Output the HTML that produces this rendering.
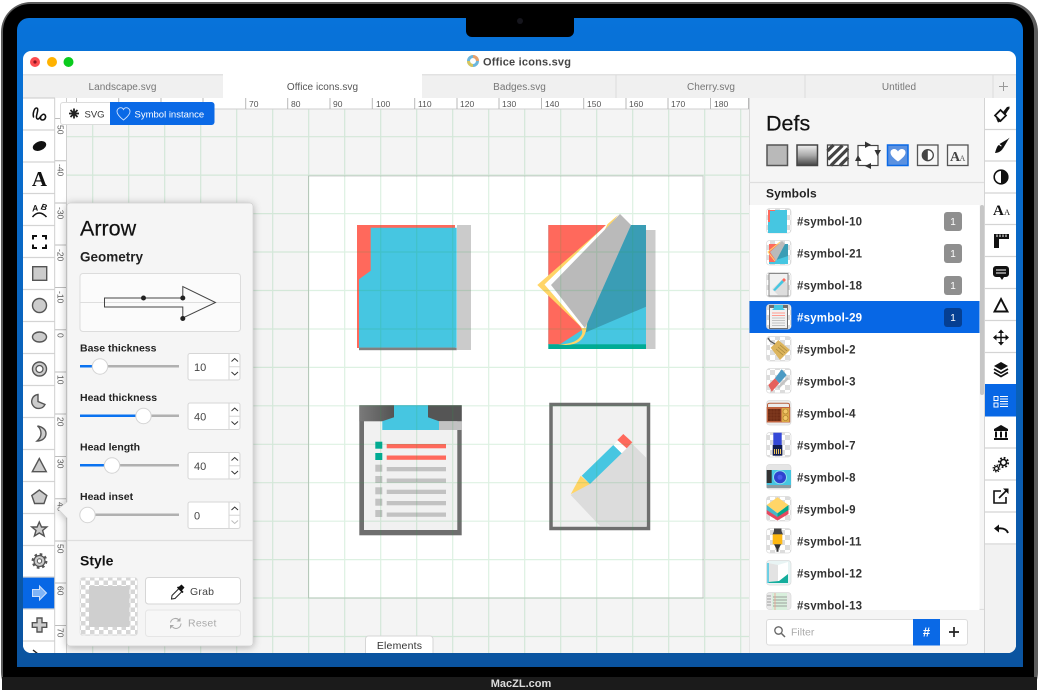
<!DOCTYPE html>
<html><head><meta charset="utf-8"><title>Office icons.svg</title>
<style>
html,body{margin:0;padding:0;background:#fff;width:1040px;height:690px;overflow:hidden}
svg{display:block;filter:blur(.3px)}
text{font-family:"Liberation Sans",sans-serif}
.t{font-size:10px;fill:#777;text-anchor:middle;letter-spacing:.05px}
.rh{font-size:8.500px;fill:#555}
.rv{font-size:8.500px;fill:#555}
.lb{font-size:10.500px;font-weight:bold;fill:#222}
.v{font-size:11px;fill:#444}
.s{font-size:11.500px;font-weight:bold;fill:#333;letter-spacing:.2px}
.b{font-size:10px;fill:#fff;text-anchor:middle}
.ic{fill:#ccc;stroke:#555;stroke-width:1.4}
.th{stroke:#dadada;stroke-width:.7}
</style></head><body>
<svg width="1040" height="690" viewBox="0 0 1040 690" xmlns="http://www.w3.org/2000/svg">
<defs>
<linearGradient id="bl" x1="0" y1="0" x2="0" y2="1"><stop offset="0" stop-color="#0873da"/><stop offset="1" stop-color="#0a539f"/></linearGradient>
<linearGradient id="hd" x1="0" y1="0" x2="1" y2="0"><stop offset="0" stop-color="#7a7a7a"/><stop offset="1" stop-color="#545454"/></linearGradient>
<linearGradient id="gr" x1="0" y1="0" x2="0" y2="1"><stop offset="0" stop-color="#f0f0f0"/><stop offset=".5" stop-color="#aaa"/><stop offset="1" stop-color="#444"/></linearGradient>
<pattern id="ck" width="10" height="10" patternUnits="userSpaceOnUse"><rect width="10" height="10" fill="#fff"/><rect width="5" height="5" fill="#dcdcdc"/><rect x="5" y="5" width="5" height="5" fill="#dcdcdc"/></pattern>
<pattern id="ck2" width="9" height="9" patternUnits="userSpaceOnUse"><rect width="9" height="9" fill="#fff"/><rect width="4.500" height="4.500" fill="#d6d6d6"/><rect x="4.500" y="4.500" width="4.500" height="4.500" fill="#d6d6d6"/></pattern>
<filter id="sh" x="-20%" y="-10%" width="140%" height="120%"><feDropShadow dx="0" dy="1" stdDeviation="4" flood-color="#000" flood-opacity=".3"/></filter>
<clipPath id="scr"><path d="M23 59a8 8 0 0 1 8-8H1008a8 8 0 0 1 8 8V645a8 8 0 0 1-8 8H31a8 8 0 0 1-8-8Z"/></clipPath>
</defs>

<!-- laptop -->
<rect x="1" y="2" width="1037" height="700" rx="30" fill="#5c5c5c"/>
<rect x="3" y="4" width="1031" height="700" rx="27" fill="#000"/>
<rect x="2" y="677" width="1035" height="13" fill="#1b1b1b"/>
<path d="M17 30a12 12 0 0 1 12-12H1011a12 12 0 0 1 12 12V667H17Z" fill="url(#bl)"/>
<path d="M466 18H574V31a6 6 0 0 1-6 6H472a6 6 0 0 1-6-6Z" fill="#000"/>
<circle cx="520" cy="21" r="3" fill="#15151c"/>
<text x="521" y="687" font-size="11" font-weight="bold" fill="#ddd" text-anchor="middle">MacZL.com</text>

<g clip-path="url(#scr)">
<rect x="23" y="51" width="993" height="603" fill="#fff"/>
<!-- title -->
<circle cx="35" cy="62" r="5" fill="#fc4b4f"/><circle cx="35" cy="62" r="1.600" fill="#8c1420"/>
<circle cx="52" cy="62" r="5" fill="#ffb200"/>
<circle cx="68.500" cy="62" r="5" fill="#0acb1d"/>
<circle cx="473" cy="61" r="4.500" fill="none" stroke="#6cb6dc" stroke-width="3"/>
<path d="M473 56.500a4.500 4.500 0 0 1 4.500 4.500" fill="none" stroke="#e9a06a" stroke-width="3"/>
<path d="M468.500 61a4.500 4.500 0 0 0 4.500 4.500" fill="none" stroke="#d8c65e" stroke-width="3"/>
<text x="483" y="65.500" font-size="11" font-weight="bold" fill="#444" letter-spacing=".2">Office icons.svg</text>
<!-- tabs -->
<rect x="23" y="74" width="993" height="24" fill="#f0f0f0"/>
<rect x="23" y="74" width="993" height="1.500" fill="#e2e2e2"/>
<rect x="223" y="74" width="199" height="24" fill="#fff"/>
<path d="M616 75V98M805 75V98M993 75V98" stroke="#dcdcdc"/>
<text class="t" x="122.500" y="90">Landscape.svg</text>
<text class="t" x="322.500" y="90" style="fill:#555">Office icons.svg</text>
<text class="t" x="519.500" y="90">Badges.svg</text>
<text class="t" x="711" y="90">Cherry.svg</text>
<text class="t" x="899" y="90">Untitled</text>
<path d="M999 86.500h9M1003.500 82v9" stroke="#999" stroke-width="1"/>

<!-- canvas -->
<rect x="55" y="98" width="694" height="556" fill="#f4f4f4"/>
<rect x="308.500" y="176" width="394.500" height="422" fill="#fff" stroke="#c4c4c4" stroke-width=".8"/>

<!-- icon 1 -->
<rect x="357" y="225" width="98" height="123" fill="#ff695c"/>
<rect x="457" y="225" width="14" height="125" fill="#cbcbcb"/>
<path d="M370.700 227.700H456.700V347.700H359V279.300L370.700 270.700Z" fill="#46c6e1"/>
<rect x="359" y="347.700" width="97.700" height="2.500" fill="#808080"/>
<!-- icon 2 -->
<rect x="646" y="230" width="9.500" height="119" fill="#cbcbcb"/>
<rect x="548.300" y="225" width="97.700" height="120" fill="#46c6e1"/>
<path d="M548.300 225H612L585 328L560 344.300H548.300Z" fill="#ff695c"/>
<path d="M631 225H646V306.700L582 334Z" fill="#3a9db5"/>
<rect x="548.300" y="344.300" width="97.700" height="4.700" fill="#00ab94"/>
<path d="M618 215L537.300 285L579 325Q585 332 580 337Q575 344 558 344.500L566 345Q582 345 586 331L600 240Z" fill="#ffd567"/>
<path d="M608 223L544.500 284.500L582 328L586 328L600 240Z" fill="#fff"/>
<path d="M620 214L631 225L585 328.300L551 285Z" fill="#bababa"/>
<!-- icon 3 -->
<rect x="359.300" y="405.300" width="102.400" height="130" fill="#6e6e6e"/>
<path d="M359.300 405.300H394V421.300H359.300Z" fill="url(#hd)"/>
<path d="M428 405.300H461.700V421.300H428Z" fill="#555"/>
<rect x="364" y="421.300" width="93.300" height="108.700" fill="#f1f1f1"/>
<path d="M439 421.300H461.700V430H439Z" fill="#c2c2c2"/>
<path d="M394 405.300H428V417.300L439 421.300V430H382.300V421.300L394 417.300Z" fill="#46c6e1"/>
<rect x="375.300" y="441.700" width="7" height="7" fill="#00ab94"/><rect x="386.700" y="444" width="59.300" height="4.300" fill="#ff695c"/>
<rect x="375.300" y="453" width="7" height="7" fill="#00ab94"/><rect x="386.700" y="455.500" width="59.300" height="4.300" fill="#ff695c"/>
<g fill="#c2c2c2">
<rect x="375.300" y="464.700" width="7" height="7"/><rect x="386.700" y="467" width="59.300" height="4.300"/>
<rect x="375.300" y="476" width="7" height="7"/><rect x="386.700" y="478.500" width="59.300" height="4.300"/>
<rect x="375.300" y="487.300" width="7" height="7"/><rect x="386.700" y="489.700" width="59.300" height="4.300"/>
<rect x="375.300" y="498.700" width="7" height="7"/><rect x="386.700" y="501" width="59.300" height="4.300"/>
<rect x="375.300" y="510" width="7" height="7"/><rect x="386.700" y="512.500" width="59.300" height="4.300"/>
</g>
<!-- icon 4 -->
<rect x="551" y="404.500" width="97.500" height="124" fill="#f1f1f1" stroke="#6e6e6e" stroke-width="3.500"/>
<path d="M631.700 443.300L646.700 458.300V526H600L570.700 495Z" fill="#dcdcdc"/>
<path d="M570.700 494.300L580.700 475.700L590 484Z" fill="#ffd567"/>
<path d="M581.700 475.700L613.300 445L621.700 453.300L590 484Z" fill="#46c6e1"/>
<path d="M613.300 445L618.300 440L626.700 448.300L621.700 453.300Z" fill="#fff"/>
<path d="M617.300 440L623.300 434L632.300 442.300L626.700 448.300Z" fill="#ff695c"/>

<!-- grid -->
<path d="M92.700 109V654M128.700 109V654M164.700 109V654M200.700 109V654M236.700 109V654M272.700 109V654M308.700 109V654M344.700 109V654M380.700 109V654M416.700 109V654M452.700 109V654M488.700 109V654M524.700 109V654M560.700 109V654M596.700 109V654M632.700 109V654M668.700 109V654M704.700 109V654M740.700 109V654M67 136.700H749M67 175.100H749M67 213.600H749M67 252H749M67 290.500H749M67 329H749M67 367.400H749M67 405.800H749M67 444.300H749M67 482.700H749M67 521.200H749M67 559.600H749M67 598H749M67 636.500H749" stroke="#2aa848" stroke-opacity=".16" stroke-width="1.200" fill="none"/>

<!-- h ruler -->
<rect x="66" y="98" width="683" height="11" fill="#fff"/>
<rect x="66" y="108.500" width="683" height="1" fill="#cfcfcf"/>
<path d="M66.500 98V109M76.500 98V109M118.700 98V109M161 98V109M203 98V109M245.700 98V109M287.700 98V109M330 98V109M372.300 98V109M414.700 98V109M457 98V109M499 98V109M541.500 98V109M583.700 98V109M626 98V109M668 98V109M710.500 98V109M748.500 98V109" stroke="#b9b9b9" stroke-width="1"/>
<text class="rh" x="249" y="107">70</text><text class="rh" x="291" y="107">80</text><text class="rh" x="333" y="107">90</text><text class="rh" x="376" y="107">100</text><text class="rh" x="418" y="107">110</text><text class="rh" x="460" y="107">120</text><text class="rh" x="502" y="107">130</text><text class="rh" x="545" y="107">140</text><text class="rh" x="587" y="107">150</text><text class="rh" x="629" y="107">160</text><text class="rh" x="671" y="107">170</text><text class="rh" x="714" y="107">180</text>
<!-- v ruler -->
<rect x="55" y="98" width="11.500" height="556" fill="#fff"/>
<rect x="66" y="98" width="1" height="556" fill="#cfcfcf"/>
<path d="M55 118.500H66M55 160.700H66M55 203H66M55 245H66M55 287.500H66M55 329.700H66M55 372H66M55 414H66M55 456.500H66M55 498.700H66M55 541H66M55 583H66M55 625.500H66" stroke="#bdbdbd"/>
<text class="rv" transform="rotate(90 57.500 125)" x="57.500" y="125">50</text>
<text class="rv" transform="rotate(90 57.500 164)" x="57.500" y="164">-40</text>
<text class="rv" transform="rotate(90 57.500 207)" x="57.500" y="207">-30</text>
<text class="rv" transform="rotate(90 57.500 249)" x="57.500" y="249">-20</text>
<text class="rv" transform="rotate(90 57.500 291)" x="57.500" y="291">-10</text>
<text class="rv" transform="rotate(90 57.500 333)" x="57.500" y="333">0</text>
<text class="rv" transform="rotate(90 57.500 375)" x="57.500" y="375">10</text>
<text class="rv" transform="rotate(90 57.500 417)" x="57.500" y="417">20</text>
<text class="rv" transform="rotate(90 57.500 459)" x="57.500" y="459">30</text>
<text class="rv" transform="rotate(90 57.500 502)" x="57.500" y="502">40</text>
<text class="rv" transform="rotate(90 57.500 544)" x="57.500" y="544">50</text>
<text class="rv" transform="rotate(90 57.500 586)" x="57.500" y="586">60</text>
<text class="rv" transform="rotate(90 57.500 628)" x="57.500" y="628">70</text>

<!-- chip -->
<rect x="60.500" y="102.500" width="153.500" height="22" rx="2.500" fill="#fff" stroke="#dcdcdc"/>
<path d="M110 102H211.500a3 3 0 0 1 3 3V122a3 3 0 0 1-3 3H110Z" fill="#0a69e6"/>
<path d="M74 108.500V118.500M69 113.500H79M70.500 110L77.500 117M77.500 110L70.500 117" stroke="#222" stroke-width="1.800"/>
<text x="84.500" y="117.500" font-size="9.500" fill="#333">SVG</text>
<path d="M123.500 120C119 116.500 117 114 117 111.500C117 109 119 107.700 120.700 107.700C122 107.700 123 108.500 123.500 109.500C124 108.500 125 107.700 126.300 107.700C128 107.700 130 109 130 111.500C130 114 128 116.500 123.500 120Z" fill="none" stroke="#cfe2ff" stroke-width=".9"/>
<text x="134.500" y="117.500" font-size="9.500" fill="#fff">Symbol instance</text>

<!-- elements tab -->
<path d="M365.500 654V639a3 3 0 0 1 3-3H430a3 3 0 0 1 3 3V654" fill="#fff" stroke="#d6d6d6"/>
<text x="399.500" y="649" font-size="10.500" fill="#333" text-anchor="middle" letter-spacing=".2">Elements</text>

<!-- left toolbar -->
<rect x="23" y="98" width="32" height="556" fill="#fff"/>
<rect x="23" y="577" width="32" height="32" fill="#0767e5"/>
<path d="M23 98H55M23 130H55M23 162H55M23 193.500H55M23 225.500H55M23 257.500H55M23 289.500H55M23 321.500H55M23 353.500H55M23 385.500H55M23 417.500H55M23 449.500H55M23 481.500H55M23 513.500H55M23 545.500H55M23 577H55M23 609H55M23 641H55" stroke="#d4d4d4" stroke-width="1.200"/>
<path d="M54.700 98V654" stroke="#cfcfcf"/>
<path d="M33.500 117C32.500 113 34.500 108 36.500 108C39 108 37 113 36.500 116C36 119 38 120 39.500 118C41 115.500 43.500 113 45 115C46.500 117 45 120 42.500 120C40.500 120 40 118 41 116" fill="none" stroke="#111" stroke-width="1.500" stroke-linecap="round"/>
<ellipse cx="39.500" cy="146" rx="7" ry="4.500" transform="rotate(-22 39.500 146)" fill="#111"/>
<text x="39.500" y="186" font-size="21" font-weight="bold" text-anchor="middle" fill="#111" style="font-family:'Liberation Serif',serif">A</text>
<text x="35" y="211" font-size="8.500" font-weight="bold" font-style="italic" text-anchor="middle" fill="#111" transform="rotate(-10 35 208)">A</text>
<text x="44" y="210" font-size="8.500" font-weight="bold" font-style="italic" text-anchor="middle" fill="#111" transform="rotate(12 44 207)">B</text>
<path d="M32.500 217Q39 209 46.500 217" fill="none" stroke="#111" stroke-width="1.500"/>
<path d="M33 239.500V236H37M42 236H46V239.500M46 244.500V248H42M37 248H33V244.500" fill="none" stroke="#111" stroke-width="2"/>
<rect class="ic" x="32.700" y="266.700" width="14" height="13.600"/>
<circle class="ic" cx="39.500" cy="305.500" r="7"/>
<ellipse class="ic" cx="39.500" cy="337" rx="7" ry="5"/>
<circle class="ic" cx="39.500" cy="369" r="7"/><circle cx="39.500" cy="369" r="3.500" fill="#fff" stroke="#555" stroke-width="1.300"/>
<path class="ic" d="M38 394.500V401.500L45 404.500A7 7 0 1 1 38 394.500Z"/>
<path class="ic" d="M37.500 426C43 427 46 430 46 433.500C46 438 42 441 37 441C40 438.500 41 436 41 433.500C41 431 40 428 37.500 426Z"/>
<path class="ic" d="M39.300 458.500L46.300 471.700H32.300Z"/>
<path class="ic" d="M39.300 490L46.800 495.500L44 503.500H34.600L31.800 495.500Z"/>
<path class="ic" d="M39.300 522L41.500 527H46.800L42.600 530.500L44.200 536L39.300 533L34.400 536L36 530.500L31.800 527H37.100Z"/>
<circle cx="39.500" cy="561" r="5.500" fill="#ccc" stroke="#555" stroke-width="1.200"/><circle cx="39.500" cy="561" r="2.200" fill="#fff" stroke="#555"/><circle cx="39.500" cy="561" r="6.500" fill="none" stroke="#555" stroke-width="2.800" stroke-dasharray="2.500 2.600"/>
<path d="M32.500 589.500H39.500V586L46.500 593L39.500 600V596.500H32.500Z" fill="#7fb4f7" stroke="#cfe1fb" stroke-width="1"/>
<path class="ic" d="M37 618H42V622.700H46.700V627.300H42V632H37V627.300H32.300V622.700H37Z"/>
<path d="M33 650L38 654" stroke="#222" stroke-width="1.400"/>

<!-- right panel -->
<rect x="749" y="98" width="235" height="556" fill="#f5f5f5"/>
<path d="M749.500 98V654" stroke="#d8d8d8"/>
<path d="M749 182.500H984M749 609.500H984" stroke="#dedede" stroke-width="1.200"/>
<text x="766" y="130.500" font-size="21.500" fill="#111" stroke="#111" stroke-width=".2">Defs</text>
<rect x="767" y="145" width="20.500" height="20.500" fill="#b9b9b9" stroke="#555" stroke-width="1.500"/>
<rect x="797" y="145" width="20.500" height="20.500" fill="url(#gr)" stroke="#444" stroke-width="1.500"/>
<rect x="827.500" y="145" width="20.500" height="20.500" fill="#fff"/>
<path d="M827.500 151L833.500 145M828 159.500L842.500 145.500M831 165.500L848 148.500M840 165.500L848 157.500" stroke="#444" stroke-width="3.300"/>
<rect x="827.500" y="145" width="20.500" height="20.500" fill="none" stroke="#444" stroke-width="1.300"/>
<rect x="858" y="145.500" width="20" height="20" fill="#fff" stroke="#444" stroke-width="1.200"/>
<path d="M865 141.500L871 144.800L865 148ZM881 150L877.500 156L874.500 150ZM871 163L865 166L871 169ZM855 161L858 155L861.500 161Z" fill="#333"/>
<rect x="887.500" y="145" width="20.500" height="20.500" fill="#5b91e0" stroke="#0a69e6" stroke-width="1.500"/>
<path d="M898 161.500C892.500 157.500 890.500 155 890.500 152.500C890.500 150 892.500 149 894.200 149C895.700 149 897.300 150 898 151.500C898.700 150 900.300 149 901.800 149C903.500 149 905.500 150 905.500 152.500C905.500 155 903.500 157.500 898 161.500Z" fill="#fff"/>
<rect x="917.500" y="145" width="20.500" height="20.500" fill="#f7f7f7" stroke="#555" stroke-width="1.300"/>
<circle cx="927.800" cy="155.200" r="5.500" fill="#fff" stroke="#444" stroke-width="1.300"/><path d="M927.800 149.700A5.500 5.500 0 0 0 927.800 160.700Z" fill="#444"/>
<rect x="947.500" y="145" width="20.500" height="20.500" fill="#f7f7f7" stroke="#555" stroke-width="1.300"/>
<text x="950" y="161" font-size="14" fill="#444" style="font-family:'Liberation Serif',serif" font-weight="bold">A</text><text x="959.500" y="161" font-size="8" fill="#555" style="font-family:'Liberation Serif',serif">A</text>
<text x="766" y="197.500" font-size="12" font-weight="bold" fill="#222" letter-spacing=".1">Symbols</text>

<rect x="749.500" y="205" width="230" height="405" fill="#fff"/>
<rect x="749.500" y="301" width="230" height="32" fill="#0767e5"/>
<rect x="980" y="205" width="4" height="190" rx="2" fill="#c6c6c6"/>

<text class="s" x="797" y="225.500">#symbol-10</text>
<text class="s" x="797" y="257.500">#symbol-21</text>
<text class="s" x="797" y="289.500">#symbol-18</text>
<text class="s" x="797" y="321.500" style="fill:#fff">#symbol-29</text>
<text class="s" x="797" y="353.500">#symbol-2</text>
<text class="s" x="797" y="385.500">#symbol-3</text>
<text class="s" x="797" y="417.500">#symbol-4</text>
<text class="s" x="797" y="449.500">#symbol-7</text>
<text class="s" x="797" y="481.500">#symbol-8</text>
<text class="s" x="797" y="513.500">#symbol-9</text>
<text class="s" x="797" y="545.500">#symbol-11</text>
<text class="s" x="797" y="577.500">#symbol-12</text>
<text class="s" x="797" y="609.500">#symbol-13</text>

<rect x="944" y="212" width="18" height="19" rx="3" fill="#8f8f8f"/><text class="b" x="953" y="225">1</text>
<rect x="944" y="244" width="18" height="19" rx="3" fill="#8f8f8f"/><text class="b" x="953" y="257">1</text>
<rect x="944" y="276" width="18" height="19" rx="3" fill="#8f8f8f"/><text class="b" x="953" y="289">1</text>
<rect x="944" y="308" width="18" height="19" rx="3" fill="#053f92"/><text class="b" x="953" y="321">1</text>

<!-- thumbnails -->
<g>
<rect class="th" x="766.500" y="208.500" width="24.500" height="24.500" rx="3" fill="url(#ck)"/>
<rect x="768" y="210" width="19" height="23" fill="#46c6e1"/><rect x="768" y="210" width="2" height="12" fill="#ff695c"/><rect x="770" y="210" width="5" height="1" fill="#ff695c"/>

<rect class="th" x="766.500" y="240.500" width="24.500" height="24.500" rx="3" fill="url(#ck)"/>
<rect x="769" y="244" width="19" height="20" fill="#46c6e1"/><path d="M769 244H779L775 262H769Z" fill="#ff695c"/><path d="M784 244H788V256L776 260Z" fill="#3a9db5"/><path d="M782 241L785 244L776 261L770 252Z" fill="#bababa"/><path d="M780 242L768 252L775 261" fill="none" stroke="#ffd567" stroke-width="1"/>

<rect class="th" x="766.500" y="272.500" width="24.500" height="24.500" rx="3" fill="url(#ck)"/>
<rect x="769" y="273.500" width="19" height="22.500" fill="#f1f1f1" stroke="#8a8a8a" stroke-width="1"/><path d="M783 279L787 283V295H778L772 289Z" fill="#ddd"/><path d="M773 290L782 280L784 282L775 291Z" fill="#46c6e1"/><path d="M782 280L784 278L786 280L784 282Z" fill="#ff695c"/>

<rect class="th" x="766.500" y="304.500" width="24.500" height="24.500" rx="3" fill="url(#ck)"/>
<rect x="769" y="305" width="19" height="24" fill="#6e6e6e"/><rect x="770" y="308" width="17" height="20" fill="#f1f1f1"/><path d="M774 305H783V308L785 310H772L774 308Z" fill="#46c6e1"/><path d="M772 313H785M772 315.500H785" stroke="#ff9a90"/><path d="M772 318H785M772 320.500H785M772 323H785M772 325.500H785" stroke="#c2c2c2"/>

<rect class="th" x="766.500" y="336.500" width="24.500" height="24.500" rx="3" fill="url(#ck)"/>
<path d="M770.700 347.700L778.300 340L790 350L780 360Z" fill="#dcb45c"/><path d="M776 349L783 355M778 347L785 353M780 345L787 351" stroke="#a98a3e" stroke-width=".8"/><path d="M768 338L770 341L775 344" fill="none" stroke="#555" stroke-width="1.200"/>

<rect class="th" x="766.500" y="368.500" width="24.500" height="24.500" rx="3" fill="url(#ck)"/>
<path d="M768.300 385L775 378.300L779.300 383.300L771.700 391.700Z" fill="#e5605c"/><path d="M775 378.300L781.700 369.300L786.700 375L779.300 383.300Z" fill="#4b9ac4"/><path d="M778 388L788 378" stroke="#c4c4c4" stroke-width="2.500"/>

<rect class="th" x="766.500" y="400.500" width="24.500" height="24.500" rx="3" fill="#ececec"/>
<path d="M767.500 409V405Q767.500 403.300 770 403.300H787Q789.500 403.300 789.500 405V409" fill="none" stroke="#b8603e" stroke-width="1"/>
<rect x="766.700" y="407" width="23.500" height="15.500" fill="#c0633f"/><rect x="768" y="409" width="12.700" height="12" fill="#6f2c15"/><path d="M771 409V421M774 409V421M777 409V421M768 412H781M768 415H781M768 418H781" stroke="#8c4326" stroke-width=".5"/><rect x="781.700" y="408" width="7.600" height="14" fill="#dba948"/><circle cx="785.500" cy="411.500" r="2.500" fill="#f2c766" stroke="#a9792b" stroke-width=".6"/><circle cx="785.500" cy="418" r="2.500" fill="#f2c766" stroke="#a9792b" stroke-width=".6"/>

<rect class="th" x="766.500" y="432.500" width="24.500" height="24.500" rx="3" fill="url(#ck)"/>
<rect x="773.300" y="432.700" width="8.400" height="12.300" fill="#3549d8"/><rect x="772.700" y="445" width="9.600" height="10.700" fill="#111c50"/><path d="M774.500 449V454M776.500 449V454M778.500 449V454M780.500 449V454" stroke="#f0c95e"/>

<rect class="th" x="766.500" y="464.500" width="24.500" height="24.500" rx="3" fill="#e5e5e5"/>
<rect x="766.700" y="470" width="24.300" height="15" fill="#46c6e1"/><rect x="766.700" y="470" width="5" height="13" fill="#333"/><circle cx="780" cy="477.300" r="6.500" fill="#2f43cf" stroke="#8fdcec"/><circle cx="780" cy="477.300" r="2.500" fill="#4a5cea"/><rect x="766.700" y="485" width="24.300" height="3" fill="#8c9da3"/>

<rect class="th" x="766.500" y="496.500" width="24.500" height="24.500" rx="3" fill="url(#ck)"/>
<path d="M777.500 497.300L788.500 505L777.500 513.300L766.700 505Z" fill="#ffd567"/><path d="M766.700 505V510.500L777.500 518V513.300Z" fill="#46b8c8"/><path d="M788.500 505V510.500L777.500 518V513.300Z" fill="#00a88c"/><path d="M766.700 510L777.500 517L788.500 510V514L777.500 520.500L766.700 514Z" fill="#e5485f"/>

<rect class="th" x="766.500" y="528.500" width="24.500" height="24.500" rx="3" fill="url(#ck)"/>
<path d="M774 528.500H781.500V531L783 534.500H772.500L774 531Z" fill="#444"/><rect x="772.700" y="534.300" width="9.600" height="10" fill="#fdb813"/><path d="M774 544.300H781L778.500 549V551.700H776.500V549Z" fill="#333"/>

<rect class="th" x="766.500" y="560.500" width="24.500" height="24.500" rx="3" fill="#e8f4f4"/>
<path d="M768 563L778 565V581L768 582Z" fill="#e3e3e3"/><path d="M778 565L788 562V581L778 581Z" fill="#fff"/><path d="M768 582L779 581L788 574V583H768Z" fill="#14ad9c"/><path d="M768 563V583" stroke="#46c6e1" stroke-width="1.500"/>

<rect class="th" x="766.500" y="592.500" width="24.500" height="17" rx="3" fill="#e9e9e9"/>
<rect x="772" y="593" width="15" height="17" fill="#d8efdc"/><path d="M767 596H771M767 599H771M767 602H771M767 605H771M773 597H787M773 600H787M773 603H787M773 606H787" stroke="#888" stroke-width=".8"/><path d="M775 593V610" stroke="#f0a090" stroke-width=".8"/>
</g>

<rect x="749.500" y="610" width="234.500" height="44" fill="#f5f5f5"/>
<rect x="766.500" y="619.500" width="201" height="25.500" rx="2.500" fill="#fff" stroke="#dcdcdc"/>
<rect x="913" y="619" width="27" height="26.500" fill="#0a69e6"/>
<circle cx="778.500" cy="630.500" r="3.700" fill="none" stroke="#666" stroke-width="1.300"/><path d="M781.500 633.500L785 637" stroke="#666" stroke-width="1.500"/>
<text x="791" y="635.500" font-size="10.500" fill="#aaa">Filter</text>
<text x="926.500" y="636.500" font-size="13" font-weight="bold" fill="#fff" text-anchor="middle">#</text>
<path d="M949 632H959M954 627V637" stroke="#222" stroke-width="1.700"/>

<!-- right toolbar -->
<rect x="984.500" y="98" width="32" height="556" fill="#f2f2f2"/>
<rect x="985" y="98" width="31" height="447" fill="#fff"/>
<rect x="985" y="384" width="31" height="32.500" fill="#0767e5"/>
<path d="M984.500 98V654" stroke="#d4d4d4"/>
<path d="M985 129.500H1016M985 161H1016M985 193H1016M985 224.500H1016M985 256.500H1016M985 288.500H1016M985 320.500H1016M985 352.500H1016M985 448H1016M985 480H1016M985 512H1016M985 544H1016" stroke="#d4d4d4" stroke-width="1.200"/>
<!-- brush -->
<path d="M1003 112L1005 109.500L1007 107L1009.500 106.500L1009.500 108.500L1008 110.500L1005.500 114.500Z" fill="#111"/>
<path d="M995 115.500L1000.500 110L1006 115.500L1000.500 121Z" fill="#fff" stroke="#111" stroke-width="1.700"/>
<path d="M996 118L1000.500 121.500L998 122.500Z" fill="#111"/>
<path d="M1009.500 138L1002 146L999.500 144Z" fill="#111"/><path d="M1009.500 137.500L1001 146.500L1003 148.500Z" fill="#111"/><path d="M999 145C997 145.500 996 150 995 153C998 153 1002 151 1003 148Z" fill="#111"/>
<circle cx="1001" cy="177" r="6.800" fill="#fff" stroke="#111" stroke-width="1.600"/><path d="M1001 170.200A6.800 6.800 0 0 1 1001 183.800Z" fill="#111"/>
<text x="993" y="215" font-size="15" font-weight="bold" fill="#111" style="font-family:'Liberation Serif',serif">A</text><text x="1004" y="215" font-size="8.500" fill="#222" style="font-family:'Liberation Serif',serif">A</text>
<path d="M994 234H1009V239H999V248H994Z" fill="#111"/><path d="M997 234.500V237M1000 234.500V237M1003 234.500V237M1006 234.500V237" stroke="#fff" stroke-width="1"/>
<path d="M996 266H1006a3 3 0 0 1 3 3V274a3 3 0 0 1-3 3H1004L1002 280L1000 277H996a3 3 0 0 1-3-3V269a3 3 0 0 1 3-3Z" fill="#111"/><path d="M996 270H1006M996 273H1006" stroke="#fff" stroke-width="1"/>
<path d="M1001 299L1007.500 311.500H994.500Z" fill="none" stroke="#111" stroke-width="1.900"/>
<path d="M1001 331V344M994.500 337.500H1007.500" stroke="#111" stroke-width="1.400"/><path d="M1001 329.500L1004 333H998ZM1001 345.500L1004 342H998ZM993 337.500L996.500 334.500V340.500ZM1009 337.500L1005.500 334.500V340.500Z" fill="#111"/>
<path d="M1001 362L1008 366L1001 370L994 366Z" fill="#111"/><path d="M994 369L1001 373L1008 369" fill="none" stroke="#111" stroke-width="1.700"/><path d="M994 372.500L1001 376.500L1008 372.500" fill="none" stroke="#111" stroke-width="1.700"/>
<path d="M994 396.500H998V400.500H994ZM994 403H998V407H994Z" fill="none" stroke="#fff" stroke-width="1"/><path d="M1000 396.500H1008M1000 399H1008M1000 401.500H1008M1000 404H1008M1000 406.500H1008" stroke="#fff" stroke-width="1"/>
<path d="M994 429L1001 425L1008 429V431H994ZM994 438H1008V440H994Z" fill="#111"/><path d="M996 431.500V437.500M1001 431.500V437.500M1006 431.500V437.500" stroke="#111" stroke-width="2"/>
<circle cx="1003.500" cy="462.500" r="3" fill="#fff" stroke="#111" stroke-width="1.600"/><circle cx="1003.500" cy="462.500" r="4.700" fill="none" stroke="#111" stroke-width="1.800" stroke-dasharray="1.800 1.900"/><circle cx="996.500" cy="468.500" r="2" fill="none" stroke="#111" stroke-width="1.300"/><circle cx="996.500" cy="468.500" r="3.300" fill="none" stroke="#111" stroke-width="1.300" stroke-dasharray="1.300 1.300"/>
<path d="M1001 491H994V503H1006V497" fill="none" stroke="#111" stroke-width="1.600"/><path d="M999 498L1007 490" stroke="#111" stroke-width="1.600"/><path d="M1003 488.500H1008.500V494Z" fill="#111"/>
<path d="M994 528.500L999 524.500V532.500Z" fill="#111"/><path d="M998 528.500Q1006 527.500 1008 533" fill="none" stroke="#111" stroke-width="1.900"/>
</g>

<!-- popup -->
<path d="M70 203H250a3 3 0 0 1 3 3V643a3 3 0 0 1-3 3H70a3 3 0 0 1-3-3V518L58 509L67 502V206a3 3 0 0 1 3-3Z" fill="#f5f5f5" stroke="#cfcfcf" stroke-width=".7" filter="url(#sh)"/>
<text x="80" y="235.500" font-size="21.500" fill="#111" stroke="#111" stroke-width=".2">Arrow</text>
<text x="80" y="261.500" font-size="13.500" font-weight="bold" fill="#222">Geometry</text>
<rect x="80" y="273.500" width="160.500" height="58" rx="3" fill="#fbfbfb" stroke="#dcdcdc"/>
<path d="M80 302.500H240" stroke="#dedede"/>
<path d="M104.500 298H182.800V286.500L215.500 302.500L182.800 318V307H104.500Z" fill="none" stroke="#444" stroke-width="1"/>
<circle cx="143.500" cy="298" r="2.500" fill="#222"/><circle cx="182.800" cy="298" r="2.500" fill="#222"/><circle cx="182.800" cy="318.500" r="2.500" fill="#222"/>

<text class="lb" x="80" y="351.500">Base thickness</text>
<text class="lb" x="80" y="401">Head thickness</text>
<text class="lb" x="80" y="450.500">Head length</text>
<text class="lb" x="80" y="500">Head inset</text>

<rect x="80" y="365" width="99" height="2.500" fill="#b0b0b0"/><rect x="80" y="365" width="20" height="2.500" fill="#0a72f0"/>
<rect x="80" y="414.500" width="99" height="2.500" fill="#b0b0b0"/><rect x="80" y="414.500" width="63" height="2.500" fill="#0a72f0"/>
<rect x="80" y="464" width="99" height="2.500" fill="#b0b0b0"/><rect x="80" y="464" width="32" height="2.500" fill="#0a72f0"/>
<rect x="80" y="513.500" width="99" height="2.500" fill="#b0b0b0"/>
<circle cx="100" cy="366.500" r="7.700" fill="#fff" stroke="#d4d4d4"/>
<circle cx="143.500" cy="416" r="7.700" fill="#fff" stroke="#d4d4d4"/>
<circle cx="112" cy="465.500" r="7.700" fill="#fff" stroke="#d4d4d4"/>
<circle cx="87.500" cy="515" r="7.700" fill="#fff" stroke="#d4d4d4"/>

<g fill="#fff" stroke="#d6d6d6">
<rect x="188" y="353.500" width="52" height="26.500" rx="2"/>
<rect x="188" y="403" width="52" height="26.500" rx="2"/>
<rect x="188" y="452.500" width="52" height="26.500" rx="2"/>
<rect x="188" y="502" width="52" height="26.500" rx="2"/>
<path d="M229 353.500V380M229 366.700H240M229 403V429.500M229 416.200H240M229 452.500V479M229 465.700H240M229 502V528.500M229 515.200H240" fill="none"/>
</g>
<text class="v" x="194" y="371">10</text><text class="v" x="194" y="420.500">40</text><text class="v" x="194" y="470">40</text><text class="v" x="194" y="519.500">0</text>
<path d="M231.500 361.500L234.700 358.500L238 361.500M231.500 372L234.700 375L238 372M231.500 411L234.700 408L238 411M231.500 421.500L234.700 424.500L238 421.500M231.500 460.500L234.700 457.500L238 460.500M231.500 471L234.700 474L238 471M231.500 510L234.700 507L238 510" fill="none" stroke="#333" stroke-width="1"/>
<path d="M231.500 520.500L234.700 523.500L238 520.500" fill="none" stroke="#bbb" stroke-width="1"/>

<path d="M67 540.500H253" stroke="#dedede" stroke-width="1.200"/>
<text x="80" y="565.500" font-size="14" font-weight="bold" fill="#111">Style</text>
<rect x="80" y="577.500" width="57.500" height="58" rx="3" fill="url(#ck2)" stroke="#ddd" stroke-width=".6"/>
<rect x="89" y="586" width="40.500" height="41" fill="#cfcfcf"/>
<rect x="145.500" y="577.500" width="95" height="26.500" rx="3" fill="#fff" stroke="#d6d6d6"/>
<rect x="145.500" y="610" width="95" height="26.500" rx="3" fill="#f7f7f7" stroke="#e6e6e6"/>
<path d="M172 595.500L179 588.500L182 591.500L175 598.500L171.500 599Z" fill="#fff" stroke="#222" stroke-width="1"/><path d="M178 587.500L181.500 584.500L184.500 587.500L181.500 591Z" fill="#111"/><path d="M177.500 587L183 592.500" stroke="#111" stroke-width="1.600"/>
<text x="190" y="595" font-size="10.500" fill="#444" letter-spacing=".2">Grab</text>
<path d="M170.500 622.500A5 5 0 0 1 179 620M181 623.500A5 5 0 0 1 172.500 627" fill="none" stroke="#aaa" stroke-width="1"/><path d="M180.500 617.500V621.500H176.500ZM170 629V625H174Z" fill="#aaa"/>
<text x="188" y="626.500" font-size="10.500" fill="#aaa" letter-spacing=".25">Reset</text>
</svg>
</body></html>
